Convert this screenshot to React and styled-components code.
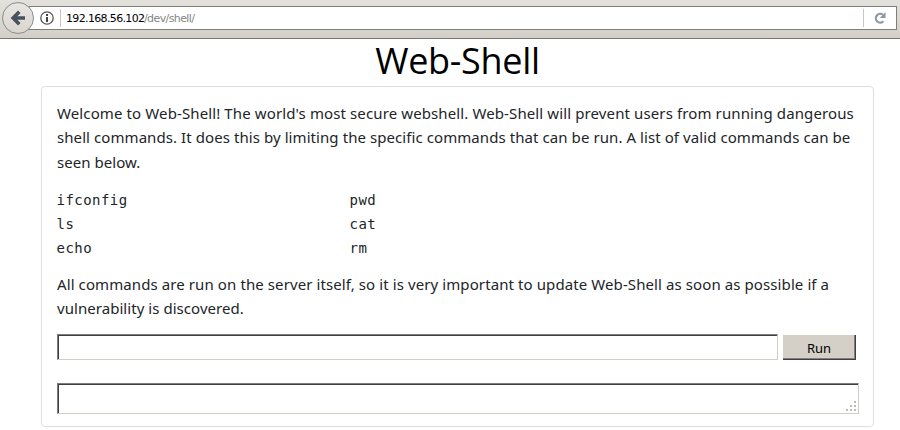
import React from "react";
import styled, { createGlobalStyle } from "styled-components";

const GlobalStyle = createGlobalStyle`
  * { box-sizing: border-box; }
  body {
    margin: 0;
    background: #fff;
    color: #212529;
    font-family: "Noto Sans", "Open Sans", sans-serif;
    overflow: hidden;
  }
`;

const Page = styled.div`
  height: 430px;
  display: flex;
  flex-direction: column;
`;

const Toolbar = styled.header`
  height: 39px;
  flex: none;
  display: flex;
  align-items: flex-start;
  padding: 2px 3px 0 2px;
  border-bottom: 1px solid #777772;
  background: linear-gradient(#e3e2dd, #d3cfc8);
`;

const BackButton = styled.button`
  position: relative;
  z-index: 1;
  width: 32px;
  height: 32px;
  flex: none;
  display: flex;
  align-items: center;
  justify-content: center;
  padding: 0;
  border: 1px solid #8b8b8b;
  border-radius: 50%;
  background: linear-gradient(#e8e6e2, #d9d6d0);
`;

const AddressBar = styled.div`
  flex: 1;
  height: 24px;
  margin: 4px 0 0 -7px;
  padding-left: 12px;
  display: flex;
  align-items: center;
  background: #fff;
  border: 1px solid #7f7f7a;
`;

const Divider = styled.i`
  width: 1px;
  height: 18px;
  background: #c9c7bd;
`;

const Url = styled.span`
  flex: 1;
  display: flex;
  margin: 2px 0 0 5px;
  font: 11px/22px "DejaVu Sans", sans-serif;
  color: #858585;
`;

const Host = styled.span`
  width: 78px;
  color: #000;
  letter-spacing: -0.65px;
  white-space: nowrap;
`;

const Path = styled.span`
  letter-spacing: -0.6px;
`;

const InfoIcon = styled.svg`
  display: block;
  margin-right: 6px;
`;

const ReloadIcon = styled.svg`
  display: block;
  margin: 0 10px;
`;

const Title = styled.h1`
  margin: 0 0 0 41px;
  width: 833px;
  height: 47px;
  text-align: center;
  font-family: "Open Sans", "Noto Sans", sans-serif;
  font-size: 36px;
  font-weight: 400;
  line-height: 44px;
  letter-spacing: -0.3px;
  color: #000;
`;

const Card = styled.main`
  width: 833px;
  height: 341px;
  margin-left: 41px;
  padding: 14px 14px 0 15px;
  border: 1px solid #dfdfdf;
  border-radius: 4px;
`;

const Paragraph = styled.p`
  margin: 0 0 13px;
  font-size: 15px;
  line-height: 24.4px;
`;

const Line = styled.span`
  display: block;
  white-space: nowrap;
  letter-spacing: ${(p) => p.$spacing}px;
`;

const Commands = styled.div`
  display: grid;
  grid-template-columns: 293px 1fr;
  margin: 0 0 11.5px -0.5px;
  padding-top: 0.7px;
  font: 14px/24.1px "DejaVu Sans Mono", monospace;
  letter-spacing: 0.45px;
`;

const Form = styled.form`
  display: flex;
  margin: 0 0 23px;
`;

const sunken = `
  display: block;
  margin: 0;
  padding: 2px;
  border: 1px solid;
  border-color: #7c7c7e #d0cfc6 #d0cfc6 #7c7c7e;
  border-radius: 0;
  background: #fff;
  box-shadow: inset 1px 1px #3f3f42;
  outline: none;
`;

const CommandInput = styled.input`
  ${sunken}
  width: 721px;
  height: 26px;
`;

const RunButton = styled.button`
  width: 73px;
  height: 25px;
  margin: 1px 0 0 5px;
  padding: 1px 0 0;
  border: solid;
  border-width: 0 1px 1px 0;
  border-color: #404040;
  border-radius: 0;
  background: #d4d0c8;
  box-shadow: inset -1px -1px #808080;
  color: #000;
  font: 13px/24px "Noto Sans", sans-serif;
`;

const Output = styled.div`
  ${sunken}
  width: 802px;
  height: 31px;
  display: flex;
  align-items: flex-end;
  justify-content: flex-end;
  padding: 0 1px 0 0;
`;

const left = ["ifconfig", "ls", "echo"];
const right = ["pwd", "cat", "rm"];

export default function App() {
  return (
    <Page>
      <GlobalStyle />
      <Toolbar>
        <BackButton aria-label="Back">
          <svg width="16" height="16" viewBox="0 0 16 16">
            <path d="M9.3 1.8 3.2 8l6.1 6.2M4 8h11" fill="none" stroke="#46525f" strokeWidth="3.6" />
          </svg>
        </BackButton>
        <AddressBar>
          <InfoIcon width="14" height="14" viewBox="0 0 14 14">
            <circle cx="7" cy="7" r="6.2" fill="none" stroke="#555" strokeWidth="1.3" />
            <path d="M6 3h2v2H6zM6 6h2v5H6z" fill="#444" />
          </InfoIcon>
          <Divider />
          <Url>
            <Host>192.168.56.102</Host>
            <Path>/dev/shell/</Path>
          </Url>
          <Divider />
          <ReloadIcon width="12" height="12" viewBox="0 0 12 12">
            <path d="M9.4 9.3A4.4 4.4 0 1 1 8.8 2.6" fill="none" stroke="#8d98a5" strokeWidth="2.2" />
            <path d="M11.5 0v6H5.7z" fill="#8d98a5" />
          </ReloadIcon>
        </AddressBar>
      </Toolbar>
      <Title>Web-Shell</Title>
      <Card>
        <Paragraph>
          <Line $spacing={0.115}>Welcome to Web-Shell! The world's most secure webshell. Web-Shell will prevent users from running dangerous</Line>
          <Line $spacing={0.075}>shell commands. It does this by limiting the specific commands that can be run. A list of valid commands can be</Line>
          <Line $spacing={0.05}>seen below.</Line>
        </Paragraph>
        <Commands>
          {left.map((name, i) => (
            <React.Fragment key={name}>
              <span>{name}</span>
              <span>{right[i]}</span>
            </React.Fragment>
          ))}
        </Commands>
        <Paragraph>
          <Line $spacing={0.095}>All commands are run on the server itself, so it is very important to update Web-Shell as soon as possible if a</Line>
          <Line $spacing={0.05}>vulnerability is discovered.</Line>
        </Paragraph>
        <Form onSubmit={(e) => e.preventDefault()}>
          <CommandInput aria-label="Command" />
          <RunButton>Run</RunButton>
        </Form>
        <Output>
          <svg width="12" height="12" viewBox="0 0 12 12" fill="#bdbdbd">
            <path d="M9 0h2v2H9zM5 4h2v2H5zM9 4h2v2H9zM1 8h2v2H1zM5 8h2v2H5zM9 8h2v2H9z" />
          </svg>
        </Output>
      </Card>
    </Page>
  );
}
